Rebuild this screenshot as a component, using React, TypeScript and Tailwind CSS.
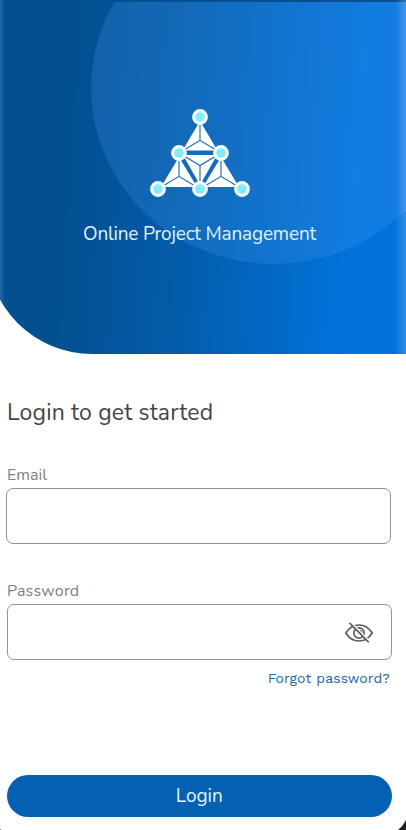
const nodes = [
  [60, 17],
  [39, 53],
  [81, 53],
  [18, 89],
  [60, 89],
  [102, 89],
];

function Logo() {
  return (
    <svg className="block h-[100px] w-[120px]" viewBox="0 0 120 100">
      <g fill="#fff">
        <path d="M60 21 77.500 50.500H42.500Z" />
        <path d="M39 57 57 87H21Z" />
        <path d="M81 57 99 87H63Z" />
        <path d="M43 55H77L60 85Z" />
      </g>
      <g fill="none" stroke="#1268b9" strokeWidth="1.1">
        <path d="M60 23V40.3M39 53 60 40.3 81 53" />
        <path d="M39 59V76.3M18 89 39 76.3 60 89" />
        <path d="M81 59V76.3M60 89 81 76.3 102 89" />
        <path d="M60 84V65.5M39 53 60 65.5 81 53" />
      </g>
      {nodes.map(([x, y]) => (
        <g key={`${x}-${y}`}>
          <circle cx={x} cy={y} r="7.9" fill="#fff" />
          <circle cx={x} cy={y} r="4.8" fill="#80edff" />
        </g>
      ))}
    </svg>
  );
}

function EyeOff() {
  return (
    <svg className="mt-px h-[22px] w-[30px]" viewBox="0 0 30 22" fill="none" stroke="#5f5f5f" strokeWidth="1.7">
      <path d="M1.800 11C5.200 5.600 9.700 3 15 3s9.800 2.600 13.200 8C24.800 16.400 20.300 19 15 19S5.200 16.400 1.800 11Z" />
      <circle cx="15" cy="11" r="5.200" />
      <path d="M15 8.300a3 3 0 0 1 2.900 3" strokeWidth="1.300" />
      <path d="M7 .5 26 19.800" stroke="#fff" strokeWidth="1.600" />
      <path d="M5.500 .8 24.800 20.300" />
    </svg>
  );
}

export default function App() {
  return (
    <main className="relative flex h-[830px] w-[406px] flex-col overflow-hidden bg-white font-[Nunito,Lato,sans-serif]">
      <header className="relative -ml-[13px] h-[354px] w-[419px] shrink-0 overflow-hidden rounded-bl-[105px] bg-[linear-gradient(94deg,#034f90_20%,#035ba8_46%,#0273dc_87%,#0273dc_100%)] pl-[13px]">
        <div className="absolute -top-[88px] left-[104px] h-[352px] w-[366px] rounded-[50%] bg-[#4aa0f5]/22" />
        <div className="absolute inset-x-0 top-0 h-[2px] bg-[#034f91]" />
        <div className="absolute inset-y-0 left-[13px] w-[5px] bg-linear-to-r from-white/15 to-transparent" />
        <div className="absolute inset-y-0 right-0 w-[11px] bg-linear-to-r from-transparent to-white/20" />
        <div className="relative flex flex-col pt-[100px]">
          <div className="ml-[140px]">
            <Logo />
          </div>
          <p className="mt-[20px] ml-[83px] text-[19px] leading-[28px] tracking-[-0.18px] whitespace-nowrap text-[#e4f2ff]">
            Online Project Management
          </p>
        </div>
      </header>

      <form className="flex flex-col" onSubmit={(event) => event.preventDefault()}>
        <h1 className="mt-[43px] ml-[7px] text-[23px] leading-[32px] tracking-[0.17px] whitespace-nowrap text-[#454545]">
          Login to get started
        </h1>
        <label htmlFor="email" className="mt-[34px] ml-[7px] text-[16px] leading-[24px] text-[#808080]">
          Email
        </label>
        <input
          id="email"
          type="email"
          className="mt-px ml-[6px] h-[56px] w-[385px] rounded-[7px] border border-[#929292] px-4 outline-none"
        />
        <label htmlFor="password" className="mt-[35px] ml-[7px] text-[16px] leading-[24px] tracking-[0.2px] text-[#808080]">
          Password
        </label>
        <div className="mt-px ml-[7px] flex h-[56px] w-[385px] items-center rounded-[7px] border border-[#929292] pr-[17px]">
          <input id="password" type="password" className="min-w-0 flex-1 px-4 outline-none" />
          <EyeOff />
        </div>
        <a
          href="#forgot"
          className="mt-[8px] mr-[16px] self-end font-['Work_Sans',Inter,sans-serif] text-[14px] leading-[20px] tracking-[0.1px] whitespace-nowrap text-[#1767b0]"
        >
          Forgot password?
        </a>
        <button
          type="submit"
          className="mt-[87px] ml-[6.500px] h-[42px] w-[385.500px] rounded-full bg-[#0360b3] text-[19px] leading-[28px] text-[#e9f5ff]"
        >
          Login
        </button>
      </form>
      <svg className="absolute right-0 bottom-0 h-[10px] w-[8px]" viewBox="0 0 8 10">
        <path d="M8 0Q5 6 0 10H8Z" fill="#222" />
      </svg>
      <div className="absolute bottom-0 left-0 h-px w-px bg-[#777]" />
    </main>
  );
}
